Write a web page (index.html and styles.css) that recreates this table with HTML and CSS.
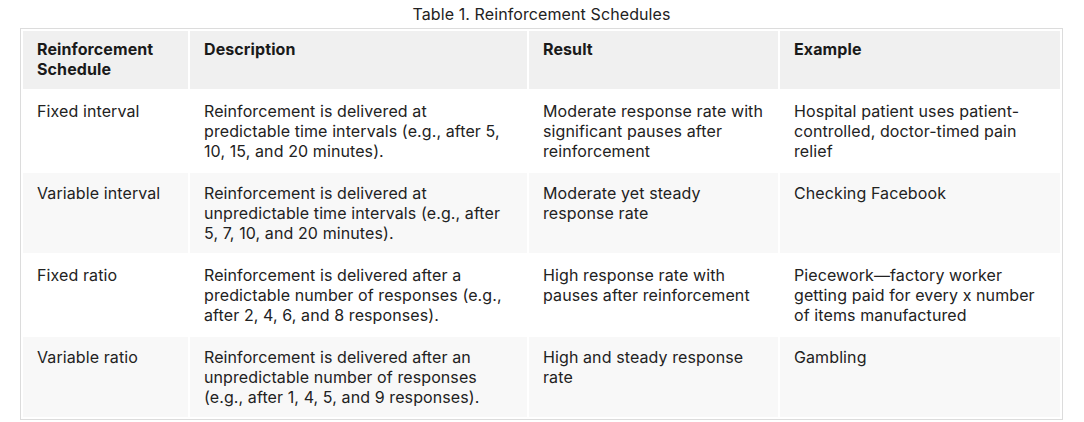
FILE: index.html
```html
<!DOCTYPE html>
<html>
<head>
<meta charset="utf-8">
<link rel="stylesheet" href="styles.css">
</head>
<body>
<table class="sched">
  <caption class="cap">Table 1. Reinforcement Schedules</caption>
  <colgroup>
    <col class="c1"><col class="c2"><col class="c3"><col class="c4">
  </colgroup>
  <thead>
    <tr>
      <th>Reinforcement Schedule</th>
      <th>Description</th>
      <th>Result</th>
      <th>Example</th>
    </tr>
  </thead>
  <tbody>
    <tr>
      <td>Fixed interval</td>
      <td>Reinforcement is delivered at predictable time intervals (e.g., after 5, 10, 15, and 20 minutes).</td>
      <td>Moderate response rate with significant pauses after reinforcement</td>
      <td>Hospital patient uses patient-controlled, doctor-timed pain relief</td>
    </tr>
    <tr class="alt">
      <td>Variable interval</td>
      <td>Reinforcement is delivered at unpredictable time intervals (e.g., after 5, 7, 10, and 20 minutes).</td>
      <td>Moderate yet steady response rate</td>
      <td>Checking Facebook</td>
    </tr>
    <tr>
      <td>Fixed ratio</td>
      <td>Reinforcement is delivered after a predictable number of responses (e.g., after 2, 4, 6, and 8 responses).</td>
      <td>High response rate with pauses after reinforcement</td>
      <td>Piecework—factory worker getting paid for every x number of items manufactured</td>
    </tr>
    <tr class="alt">
      <td>Variable ratio</td>
      <td>Reinforcement is delivered after an unpredictable number of responses (e.g., after 1, 4, 5, and 9 responses).</td>
      <td>High and steady response rate</td>
      <td>Gambling</td>
    </tr>
  </tbody>
</table>
</body>
</html>
```

FILE: styles.css
```css
html, body {
  margin: 0;
  padding: 0;
  background: #fff;
}
body {
  padding: 0 21px 0 20px;
  font-family: Inter, "Open Sans", "Liberation Sans", sans-serif;
  font-size: 16px;
  line-height: 20px;
  letter-spacing: 0.1px;
  color: #222;
}
.sched {
  width: 1043px;
  table-layout: fixed;
  border-collapse: separate;
  border-spacing: 2px;
  border: 1px solid #dcdcdc;
}
.cap {
  caption-side: top;
  text-align: center;
  padding: 4px 0 4px;
  color: #222;
  font-size: 16px;
  line-height: 20px;
}
.c1 { width: 165px; }
.c2 { width: 337px; }
.c3 { width: 249px; }
.c4 { width: 280px; }
th, td {
  text-align: left;
  vertical-align: top;
  padding: 10px 14px;
}
th {
  background: #f0f0f0;
  font-weight: 700;
  padding: 8px 14px 10px;
  color: #1a1a1a;
}
.alt td {
  background: #f8f8f8;
}
```
